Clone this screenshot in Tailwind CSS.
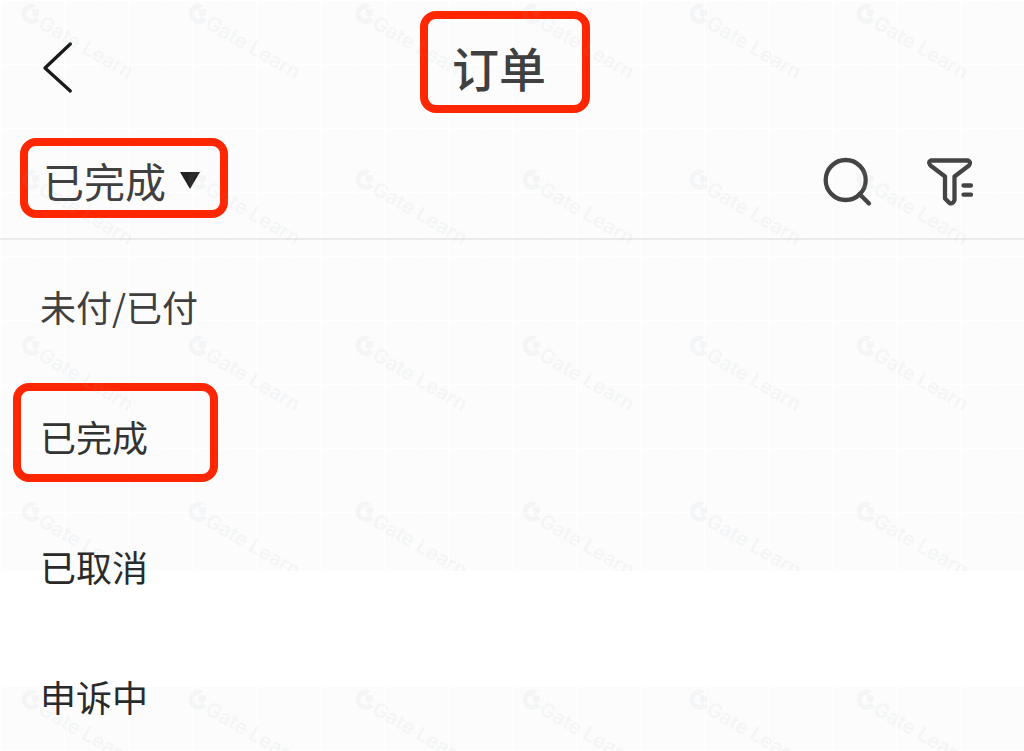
<!DOCTYPE html>
<html lang="zh-CN">
<head>
  <meta charset="UTF-8">
  <meta name="viewport" content="width=device-width, initial-scale=1.0">
  <title>订单</title>
  <script src="https://cdn.jsdelivr.net/npm/@tailwindcss/browser@4"></script>
</head>
<body class="relative isolate min-h-screen overflow-x-hidden bg-white font-['Noto_Sans_CJK_SC',sans-serif] text-[#404040]">

  <!-- Background sheets with grid -->
  <svg class="absolute inset-x-0 top-0 -z-10 h-[571px] w-full" aria-hidden="true">
    <defs>
      <pattern id="grid" width="64" height="64" patternUnits="userSpaceOnUse">
        <rect width="64" height="64" fill="#fcfcfc" />
        <path d="M0 .5H64M.5 0V64" stroke="#fff" />
        <path d="M0 32.5H64M32.5 0V64" stroke="#fff" stroke-dasharray="1 2" />
      </pattern>
    </defs>
    <rect width="100%" height="100%" fill="url(#grid)" />
  </svg>
  <svg class="absolute inset-x-0 top-[686px] -z-10 h-[calc(100%-686px)] w-full" aria-hidden="true">
    <rect width="100%" height="100%" fill="url(#grid)" />
  </svg>

  <header class="grid grid-cols-[1fr_auto_1fr] items-center pt-[11px] pr-[14px]">
    <button type="button" aria-label="返回" class="ml-10 mt-3 w-9">
      <svg class="h-14 w-9" viewBox="0 0 36 56" fill="none" stroke="#1a1a1a" stroke-width="3.3" stroke-linecap="round" stroke-linejoin="round">
        <path d="M30.300 4L5 28L30.300 51" />
      </svg>
    </button>
    <h1 class="flex h-[102px] items-center rounded-2xl border-8 border-[#ff2600] pt-2 pr-9 pl-6 text-[47px] leading-none font-medium">订单</h1>
  </header>

  <div class="flex items-center justify-between border-b-2 border-[#ebebeb] pt-[25px] pr-12 pb-5 pl-5">
    <button type="button" aria-haspopup="listbox" aria-expanded="true" aria-controls="status-list" class="flex h-20 w-[208px] items-center gap-[14px] rounded-2xl border-8 border-[#ff2600] pt-1 pl-[15px] text-[41px] leading-none">
      已完成
      <svg class="h-[17px] w-5" viewBox="0 0 20 17" fill="#222"><path d="M0 0H20L10 17Z" /></svg>
    </button>
    <div class="mt-2 flex gap-[50px]">
      <button type="button" aria-label="搜索">
        <svg class="size-[52px]" viewBox="0 0 52 52" fill="none" stroke="#444" stroke-width="4.300" stroke-linecap="round">
          <circle cx="23.700" cy="24" r="20" />
          <path d="M37.500 38L47 47.500" />
        </svg>
      </button>
      <button type="button" aria-label="筛选">
        <svg class="size-[52px]" viewBox="0 0 52 52" fill="none" stroke="#444" stroke-width="4.300" stroke-linecap="round" stroke-linejoin="round">
          <path d="M7 4.500H44Q47.500 6 45 9.500L30.500 20.500V44Q29 48.500 25.500 47L21 42.500V20.500L6.500 9.500Q3.500 6 7 4.500Z" />
          <path d="M39.500 29.500H47M39.500 38.700H47" />
        </svg>
      </button>
    </div>
  </div>

  <ul id="status-list" role="listbox" aria-label="订单状态" class="flex flex-col gap-[76px] pt-[39px] pl-10 text-[36px] leading-[54px]">
    <li role="option" aria-selected="false">未付/已付</li>
    <li role="option" aria-selected="true" class="relative text-[#333]">
      已完成
      <span class="absolute -top-[26px] -left-[27px] h-[99px] w-[205px] rounded-2xl border-8 border-[#ff2600]"></span>
    </li>
    <li role="option" aria-selected="false" class="text-[#2a2a2a]">已取消</li>
    <li role="option" aria-selected="false" class="text-[#2a2a2a]">申诉中</li>
  </ul>

  <!-- Watermark -->
  <svg class="pointer-events-none absolute inset-x-0 top-0 h-[571px] w-full" aria-hidden="true">
    <defs>
      <pattern id="mark" x="1" width="167" height="166" patternUnits="userSpaceOnUse">
        <g fill="#8ca3bd" fill-opacity=".08">
          <path d="M31 3.500A10.200 10.200 0 1 0 38.500 20.500L34.500 16.800A5 5 0 1 1 31 9L35.500 5ZM31 9V15L33.500 17L38 15V9.500Z" />
          <text transform="translate(36 27) rotate(30)" font-family="Inter, sans-serif" font-size="20" font-weight="600">Gate Learn</text>
        </g>
      </pattern>
    </defs>
    <rect width="100%" height="100%" fill="url(#mark)" />
  </svg>
  <svg class="pointer-events-none absolute inset-x-0 top-[686px] h-[calc(100%-686px)] w-full" aria-hidden="true">
    <rect width="100%" height="100%" fill="url(#mark)" />
  </svg>

</body>
</html>
